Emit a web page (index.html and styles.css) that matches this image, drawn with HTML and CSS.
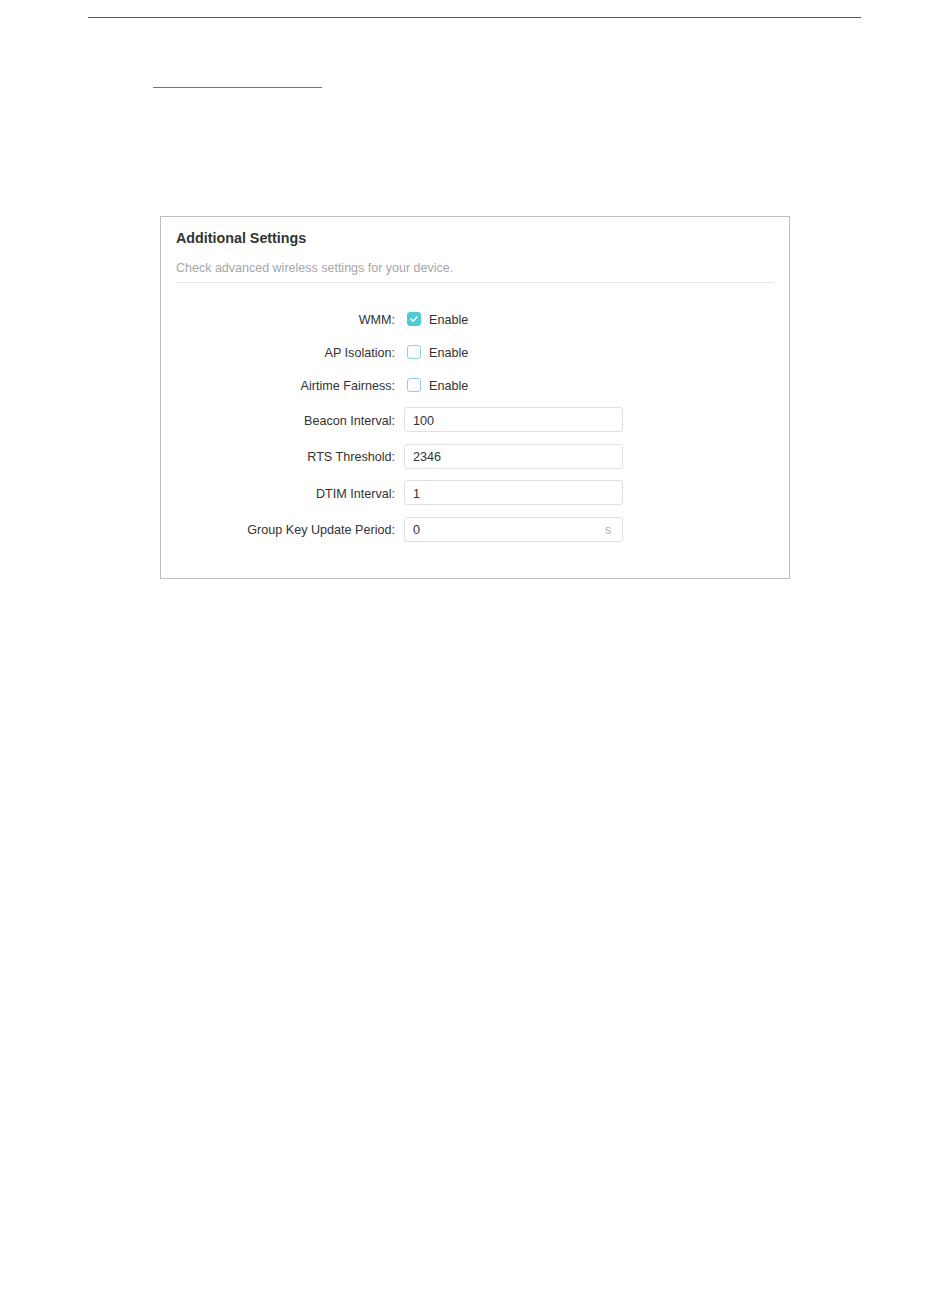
FILE: index.html
```html
<!DOCTYPE html>
<html>
<head>
<meta charset="utf-8">
<link rel="stylesheet" href="styles.css">
</head>
<body>
<div class="page">
  <div class="top-rule"></div>
  <div class="link-row"><a class="link-line" href="#"></a></div>
  <section class="panel">
    <h2 class="panel-title">Additional Settings</h2>
    <p class="panel-sub">Check advanced wireless settings for your device.</p>
    <div class="form">
      <div class="row check-row">
        <span class="label">WMM:</span>
        <span class="box checked"><svg width="10" height="10" viewBox="0 0 10 10"><path d="M2 5.2 L4.2 7.2 L8 3" fill="none" stroke="#fff" stroke-width="1.6" stroke-linecap="round" stroke-linejoin="round"/></svg></span>
        <span class="opt">Enable</span>
      </div>
      <div class="row check-row">
        <span class="label">AP Isolation:</span>
        <span class="box"></span>
        <span class="opt">Enable</span>
      </div>
      <div class="row check-row">
        <span class="label">Airtime Fairness:</span>
        <span class="box"></span>
        <span class="opt">Enable</span>
      </div>
      <div class="row input-row">
        <span class="label">Beacon Interval:</span>
        <div class="field"><span class="val">100</span></div>
      </div>
      <div class="row input-row">
        <span class="label">RTS Threshold:</span>
        <div class="field"><span class="val">2346</span></div>
      </div>
      <div class="row input-row">
        <span class="label">DTIM Interval:</span>
        <div class="field"><span class="val">1</span></div>
      </div>
      <div class="row input-row">
        <span class="label">Group Key Update Period:</span>
        <div class="field"><span class="val">0</span><span class="unit">s</span></div>
      </div>
    </div>
  </section>
</div>
</body>
</html>
```

FILE: styles.css
```css
* { box-sizing: border-box; }
html, body { margin: 0; padding: 0; background: #fff; }
body {
  font-family: "Liberation Sans", Arial, sans-serif;
  color: #333;
  width: 950px;
  height: 1297px;
}
.page { padding-top: 17px; }
.top-rule {
  margin-left: 88px;
  width: 773px;
  border-top: 1px solid #555;
}
.link-row {
  margin-top: 69px;
  padding-left: 153px;
  height: 1px;
}
.link-line {
  display: block;
  width: 169px;
  height: 1px;
  background: #3f86a6;
}
.panel {
  margin: 128px 0 0 160px;
  width: 630px;
  height: 363px;
  border: 1px solid #bdbdbd;
  padding: 11px 16px 0 15px;
}
.panel-title {
  margin: 0;
  font-size: 14.3px;
  line-height: 20px;
  font-weight: bold;
  color: #333;
}
.panel-sub {
  margin: 10px 0 0;
  font-size: 12.5px;
  line-height: 20px;
  color: #a6a6a6;
  padding-bottom: 4px;
  border-bottom: 1px solid #e6e6e6;
}
.form { padding-top: 19.5px; }
.row {
  display: flex;
  align-items: center;
  font-size: 12.6px;
}
.check-row { height: 33px; }
.input-row { height: 36.5px; }
.label {
  width: 219px;
  text-align: right;
  margin-right: 9px;
  color: #333;
  padding-top: 2px;
}
.box {
  width: 14px;
  height: 14px;
  margin-left: 3px;
  margin-right: 8px;
  border: 1px solid #8fd2dc;
  border-radius: 3px;
  display: flex;
  align-items: center;
  justify-content: center;
}
.box.checked {
  background: #4acbd6;
  border-color: #4acbd6;
}
.opt { color: #333; padding-top: 2px; }
.field {
  width: 219px;
  height: 25px;
  border: 1px solid #e0e0e0;
  border-radius: 3px;
  display: flex;
  align-items: center;
  padding: 2px 8px 0 8px;
  color: #333;
}
.val { flex: 1; }
.unit { color: #aaa; font-size: 12px; margin-right: 3px; }
```
